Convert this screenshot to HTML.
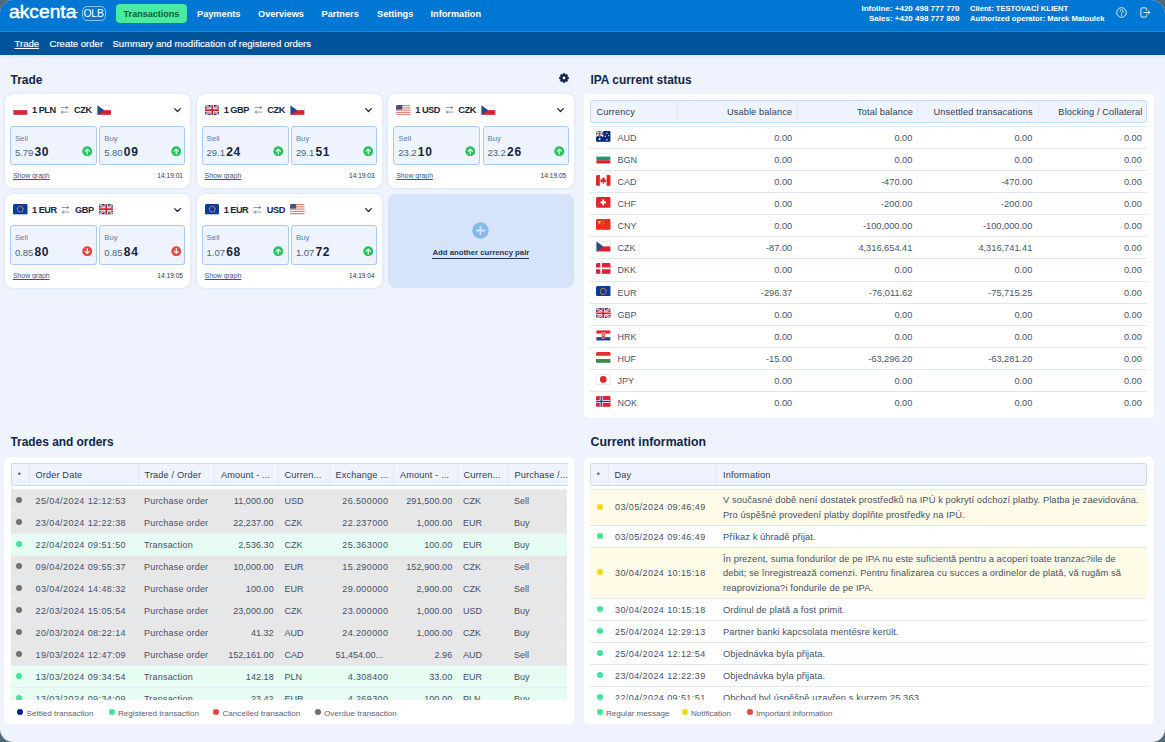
<!DOCTYPE html>
<html><head><meta charset="utf-8"><title>Akcenta OLB</title>
<style>
*{box-sizing:border-box;margin:0;padding:0}
html,body{width:1165px;height:742px;overflow:hidden;background:#4f6b75}
body{font-family:"Liberation Sans",sans-serif;color:#1a2540;-webkit-font-smoothing:antialiased}
#app{position:absolute;left:0;top:0;width:1165px;height:742px;background:#eef3fd;border-radius:13px 14.5px 13px 13px;overflow:hidden}
.abs{position:absolute}
#top{position:absolute;left:0;top:0;width:1165px;height:32px;background:#0077d3;border-bottom:1px solid #2189da}
#sub{position:absolute;left:0;top:32px;width:1165px;height:22.5px;background:#00549c;box-shadow:0 1px 3px rgba(40,80,140,.10)}
.logo{position:absolute;left:9px;top:0;font-size:17.5px;color:#fff;line-height:24px;font-weight:400;transform-origin:0 0;transform:scaleX(1.1);-webkit-text-stroke:0.45px #fff}
.lgl{position:absolute;height:1.4px;background:#fff;top:11.6px}
.olb{position:absolute;left:81.5px;top:5.5px;width:24.3px;height:15.2px;border:1px solid #8fc3ef;border-radius:5px;color:#fff;font-size:10.4px;line-height:13.4px;text-align:center;letter-spacing:-0.1px}
.btn{position:absolute;left:116px;top:4px;width:71px;height:19px;background:#48eb9f;border-radius:4px;color:#0d5c3c;font-size:9.05px;font-weight:bold;text-align:center;line-height:21px}
.nav{position:absolute;top:5px;color:#fff;font-size:9.2px;font-weight:bold;line-height:19px;white-space:nowrap}
.sn{position:absolute;top:37.5px;color:#fff;font-size:9.55px;line-height:12px;white-space:nowrap;-webkit-text-stroke:0.15px #fff}
.ti{position:absolute;color:#fff;font-size:7.8px;line-height:10px;white-space:nowrap;font-weight:bold}
h2{position:absolute;font-size:12.3px;font-weight:bold;color:#12264a;line-height:14px;white-space:nowrap}
.card{position:absolute;width:185.2px;height:93.8px;background:#fff;border-radius:8px;box-shadow:0 0 3px rgba(120,150,200,.25)}
.ch{position:absolute;left:8px;top:10px;height:11px;display:flex;align-items:center;font-size:9.2px;font-weight:bold;color:#1a2540;white-space:nowrap;letter-spacing:-0.5px}
.fl{display:block;flex:none;border-radius:1.5px}
.c1{margin-left:4.4px}.sw{margin:0 4.6px 0 4.8px;flex:none}.c2{margin-right:5.2px;letter-spacing:-0.35px}
.chev{position:absolute;left:168.5px;top:14px}
.bx{position:absolute;top:31.3px;width:86.9px;height:40px;background:#eef3fd;border:1px solid #a9cbf3;border-radius:3px}
.lb{position:absolute;left:3.8px;top:7.1px;font-size:7.8px;line-height:9px;color:#5b7fa8}
.vl{position:absolute;left:3.8px;top:17.7px;line-height:14px;white-space:nowrap;height:14px}
.sm{font-size:9.5px;color:#47648c;letter-spacing:-0.05px}
.bg{font-size:12px;font-weight:bold;color:#16233f;margin-left:1.3px;letter-spacing:0.7px}
.ar{position:absolute;left:70.6px;top:19.2px}
.sg{position:absolute;left:7.8px;top:77.3px;font-size:6.9px;text-decoration-thickness:0.6px;line-height:9px;color:#34558a;text-decoration:underline}
.tm{position:absolute;right:7.3px;top:77.3px;font-size:6.6px;line-height:9px;color:#2a3550}
.r1{height:93.6px}.r1 .bx{height:39.2px}.r1 .sg,.r1 .tm{top:76.8px}
.add{position:absolute;left:388.4px;top:194.1px;width:185.2px;height:93.8px;background:#d6e4fb;border-radius:8px}
.panel{position:absolute;background:#fff;border-radius:5px}
.th{position:absolute;background:#eef3fd;border:1px solid #c6ddf8;border-radius:2.5px}
.th span{position:absolute;top:0;font-size:9.2px;line-height:22.6px;color:#2f3b52;white-space:nowrap;letter-spacing:0.14px}
.th.b span{line-height:22.4px}
.th i{position:absolute;top:0;width:1px;height:100%;background:#dfe9f9}
.ir{position:absolute;left:6px;width:557.4px;height:22.08px;border-top:1px solid #dfe8f5}
.ir .fl{position:absolute;left:6px;top:4px;height:10.8px}
.ir .cc{position:absolute;left:27.5px;top:0;font-size:9px;line-height:22px;color:#4a556a}
.ir .n{position:absolute;top:0;font-size:9.25px;line-height:22px;color:#4a556a;white-space:nowrap}
.tr{position:absolute;left:6px;width:556.5px;height:22px;border-top:1px solid #e6edf8}
.tr.g{background:#e7e7e7}.tr.r{background:#e7fcf2}
.tr .dot{position:absolute;left:5.5px;top:7px;width:6px;height:6px;border-radius:50%;background:#6f6f6f}
.tr.r .dot{background:#42e598}
.tt,.tn{position:absolute;top:0;font-size:9px;line-height:22px;color:#445068;white-space:nowrap}
.lg{position:absolute;font-size:8.1px;line-height:10px;color:#596173;white-space:nowrap}
.lg i{position:absolute;left:-9px;top:0.2px;width:6px;height:6px;border-radius:50%}
.cr{position:absolute;left:6px;width:557.4px;border-top:1px solid #dfe8f5}
.cr.y{background:#fffbe6}
.cr .dot{position:absolute;left:6.5px;top:50%;margin-top:-4px;width:6px;height:6px;border-radius:50%;background:#42e598}
.cr.y .dot{background:#ffd60a}
.cr .d{position:absolute;left:25px;top:50%;margin-top:-7.25px;font-size:9px;line-height:14.5px;color:#445068;white-space:nowrap;letter-spacing:0.42px}
.cr .m{position:absolute;left:133px;top:3.5px;font-size:9.3px;line-height:14.5px;color:#445068;white-space:nowrap;letter-spacing:0.1px}
.clip{position:absolute;overflow:hidden}
</style></head><body><div id="app">
<div id="top">
<div class="logo">akcenta</div><i class="lgl" style="left:15.5px;width:6px"></i><i class="lgl" style="left:73px;width:4.8px"></i>
<div class="olb">OLB</div>
<div class="btn">Transactions</div>
<div class="nav" style="left:197px">Payments</div>
<div class="nav" style="left:258px">Overviews</div>
<div class="nav" style="left:321.5px">Partners</div>
<div class="nav" style="left:377px">Settings</div>
<div class="nav" style="left:430.5px">Information</div>
<div class="ti" style="right:205.5px;top:3.5px;text-align:right;font-size:8px">Infoline: +420 498 777 770<br>Sales: +420 498 777 800</div>
<div class="ti" style="left:970px;top:3.5px;font-size:7.62px">Client: TESTOVACÍ KLIENT<br>Authorized operator: Marek Matoulek</div>
<svg class="abs" style="left:1115.5px;top:6.5px" width="11" height="11" viewBox="0 0 22 22"><circle cx="11" cy="11" r="9.6" fill="none" stroke="#e6f2fc" stroke-width="1.9"/><path d="M8 8.6a3.1 3.1 0 1 1 4.6 2.7c-1.1.7-1.6 1.2-1.6 2.5" fill="none" stroke="#e6f2fc" stroke-width="1.9" stroke-linecap="round"/><circle cx="11" cy="16.4" r="1.2" fill="#e6f2fc"/></svg>
<svg class="abs" style="left:1139.5px;top:6.5px" width="11" height="11" viewBox="0 0 22 22"><path d="M13.5 7.5V4.2a2.4 2.4 0 0 0-2.4-2.4H4.2a2.4 2.4 0 0 0-2.4 2.4v13.6a2.4 2.4 0 0 0 2.4 2.4h6.9a2.4 2.4 0 0 0 2.4-2.4v-3.3" fill="none" stroke="#e6f2fc" stroke-width="2"/><path d="M7 11h10" stroke="#e6f2fc" stroke-width="2.2"/><path d="M16 7.2L21 11l-5 3.8z" fill="#eaf4fd"/></svg>
</div>
<div id="sub">
</div>
<div class="sn" style="left:14.5px;text-decoration:underline">Trade</div>
<div class="sn" style="left:49.5px">Create order</div>
<div class="sn" style="left:112.5px">Summary and modification of registered orders</div>

<h2 style="left:10.5px;top:72.5px;font-size:12px">Trade</h2>
<svg class="abs" style="left:557.9px;top:71.9px" width="12" height="12" viewBox="-6 -6 12 12"><path d="M-0.89 -3.44 L-0.76 -4.54 L0.76 -4.54 L0.89 -3.44 L1.80 -3.06 L2.67 -3.74 L3.74 -2.67 L3.06 -1.80 L3.44 -0.89 L4.54 -0.76 L4.54 0.76 L3.44 0.89 L3.06 1.80 L3.74 2.67 L2.67 3.74 L1.80 3.06 L0.89 3.44 L0.76 4.54 L-0.76 4.54 L-0.89 3.44 L-1.80 3.06 L-2.67 3.74 L-3.74 2.67 L-3.06 1.80 L-3.44 0.89 L-4.54 0.76 L-4.54 -0.76 L-3.44 -0.89 L-3.06 -1.80 L-3.74 -2.67 L-2.67 -3.74 L-1.80 -3.06Z" fill="#0f1f42" stroke="#0f1f42" stroke-width="0.7" stroke-linejoin="round"/><circle r="1.45" fill="#f4f7fe"/></svg>
<div class="card r1" style="left:5.1px;top:94.3px">
<div class="ch"><svg class="fl" width="14.5" height="10.3" viewBox="0 0 28 20" preserveAspectRatio="none"><rect width="28" height="20" fill="#fff"/><rect y="10" width="28" height="10" fill="#dc2438"/><rect x=".5" y=".5" width="27" height="19" fill="none" stroke="#d8dde6" stroke-width="1"/></svg><span class="c1">1 PLN</span><svg class="sw" width="9" height="8" viewBox="0 0 18 16"><path d="M2 5H15.5M12 1.5L15.5 5 12 8.5" fill="none" stroke="#5c6b82" stroke-width="1.5" stroke-linecap="round" stroke-linejoin="round" transform="translate(0,-1) scale(1,.8)"/><path d="M16 11H2.5M6 7.5L2.5 11 6 14.5" fill="none" stroke="#5c6b82" stroke-width="1.5" stroke-linecap="round" stroke-linejoin="round" transform="translate(0,3.4) scale(1,.8)"/></svg><span class="c2">CZK</span><svg class="fl" width="14.5" height="10.3" viewBox="0 0 28 20" preserveAspectRatio="none"><rect width="28" height="20" fill="#fff"/><rect y="10" width="28" height="10" fill="#d8212c"/><path d="M0 0 L14 10 L0 20Z" fill="#1f4a8c"/><rect x=".5" y=".5" width="27" height="19" fill="none" stroke="#d8dde6" stroke-width="1"/></svg></div><svg class="chev" width="7" height="4.4" viewBox="0 0 16 10"><path d="M1.5 1.5L8 8l6.5-6.5" fill="none" stroke="#1a2540" stroke-width="2.9" stroke-linecap="round" stroke-linejoin="round"/></svg>
<div class="bx" style="left:5px"><div class="lb">Sell</div><div class="vl"><span class="sm">5.79</span><span class="bg">30</span></div><svg class="ar" width="10.5" height="10.5" viewBox="0 0 22 22"><circle cx="11" cy="11" r="10.4" fill="#22c55e"/><path d="M11 16.5V7M6.6 10.8L11 6.4l4.4 4.4" fill="none" stroke="#fff" stroke-width="2.4" stroke-linecap="round" stroke-linejoin="round"/></svg></div>
<div class="bx" style="left:94.3px;width:86px"><div class="lb">Buy</div><div class="vl"><span class="sm">5.80</span><span class="bg">09</span></div><svg class="ar" width="10.5" height="10.5" viewBox="0 0 22 22"><circle cx="11" cy="11" r="10.4" fill="#22c55e"/><path d="M11 16.5V7M6.6 10.8L11 6.4l4.4 4.4" fill="none" stroke="#fff" stroke-width="2.4" stroke-linecap="round" stroke-linejoin="round"/></svg></div>
<div class="sg">Show graph</div><div class="tm">14:19:01</div>
</div><div class="card r1" style="left:196.8px;top:94.3px">
<div class="ch"><svg class="fl" width="14.5" height="10.3" viewBox="0 0 28 20" preserveAspectRatio="none"><rect width="28" height="20" fill="#1c3f94"/><path d="M0 0L28 20M28 0L0 20" stroke="#fff" stroke-width="4"/><path d="M0 0L28 20M28 0L0 20" stroke="#d8212c" stroke-width="1.6"/><path d="M14 0V20M0 10H28" stroke="#fff" stroke-width="6.5"/><path d="M14 0V20M0 10H28" stroke="#d8212c" stroke-width="3.6"/></svg><span class="c1">1 GBP</span><svg class="sw" width="9" height="8" viewBox="0 0 18 16"><path d="M2 5H15.5M12 1.5L15.5 5 12 8.5" fill="none" stroke="#5c6b82" stroke-width="1.5" stroke-linecap="round" stroke-linejoin="round" transform="translate(0,-1) scale(1,.8)"/><path d="M16 11H2.5M6 7.5L2.5 11 6 14.5" fill="none" stroke="#5c6b82" stroke-width="1.5" stroke-linecap="round" stroke-linejoin="round" transform="translate(0,3.4) scale(1,.8)"/></svg><span class="c2">CZK</span><svg class="fl" width="14.5" height="10.3" viewBox="0 0 28 20" preserveAspectRatio="none"><rect width="28" height="20" fill="#fff"/><rect y="10" width="28" height="10" fill="#d8212c"/><path d="M0 0 L14 10 L0 20Z" fill="#1f4a8c"/><rect x=".5" y=".5" width="27" height="19" fill="none" stroke="#d8dde6" stroke-width="1"/></svg></div><svg class="chev" width="7" height="4.4" viewBox="0 0 16 10"><path d="M1.5 1.5L8 8l6.5-6.5" fill="none" stroke="#1a2540" stroke-width="2.9" stroke-linecap="round" stroke-linejoin="round"/></svg>
<div class="bx" style="left:5px"><div class="lb">Sell</div><div class="vl"><span class="sm">29.1</span><span class="bg">24</span></div><svg class="ar" width="10.5" height="10.5" viewBox="0 0 22 22"><circle cx="11" cy="11" r="10.4" fill="#22c55e"/><path d="M11 16.5V7M6.6 10.8L11 6.4l4.4 4.4" fill="none" stroke="#fff" stroke-width="2.4" stroke-linecap="round" stroke-linejoin="round"/></svg></div>
<div class="bx" style="left:94.3px;width:86px"><div class="lb">Buy</div><div class="vl"><span class="sm">29.1</span><span class="bg">51</span></div><svg class="ar" width="10.5" height="10.5" viewBox="0 0 22 22"><circle cx="11" cy="11" r="10.4" fill="#22c55e"/><path d="M11 16.5V7M6.6 10.8L11 6.4l4.4 4.4" fill="none" stroke="#fff" stroke-width="2.4" stroke-linecap="round" stroke-linejoin="round"/></svg></div>
<div class="sg">Show graph</div><div class="tm">14:19:03</div>
</div><div class="card r1" style="left:388.4px;top:94.3px">
<div class="ch"><svg class="fl" width="14.5" height="10.3" viewBox="0 0 28 20" preserveAspectRatio="none"><rect width="28" height="20" fill="#fff"/><g fill="#e07a72"><rect y="0" width="28" height="2.2"/><rect y="4.4" width="28" height="2.2"/><rect y="8.8" width="28" height="2.2"/><rect y="13.2" width="28" height="2.2"/><rect y="17.6" width="28" height="2.4"/></g><rect width="12" height="9" fill="#44557d"/></svg><span class="c1">1 USD</span><svg class="sw" width="9" height="8" viewBox="0 0 18 16"><path d="M2 5H15.5M12 1.5L15.5 5 12 8.5" fill="none" stroke="#5c6b82" stroke-width="1.5" stroke-linecap="round" stroke-linejoin="round" transform="translate(0,-1) scale(1,.8)"/><path d="M16 11H2.5M6 7.5L2.5 11 6 14.5" fill="none" stroke="#5c6b82" stroke-width="1.5" stroke-linecap="round" stroke-linejoin="round" transform="translate(0,3.4) scale(1,.8)"/></svg><span class="c2">CZK</span><svg class="fl" width="14.5" height="10.3" viewBox="0 0 28 20" preserveAspectRatio="none"><rect width="28" height="20" fill="#fff"/><rect y="10" width="28" height="10" fill="#d8212c"/><path d="M0 0 L14 10 L0 20Z" fill="#1f4a8c"/><rect x=".5" y=".5" width="27" height="19" fill="none" stroke="#d8dde6" stroke-width="1"/></svg></div><svg class="chev" width="7" height="4.4" viewBox="0 0 16 10"><path d="M1.5 1.5L8 8l6.5-6.5" fill="none" stroke="#1a2540" stroke-width="2.9" stroke-linecap="round" stroke-linejoin="round"/></svg>
<div class="bx" style="left:5px"><div class="lb">Sell</div><div class="vl"><span class="sm">23.2</span><span class="bg">10</span></div><svg class="ar" width="10.5" height="10.5" viewBox="0 0 22 22"><circle cx="11" cy="11" r="10.4" fill="#22c55e"/><path d="M11 16.5V7M6.6 10.8L11 6.4l4.4 4.4" fill="none" stroke="#fff" stroke-width="2.4" stroke-linecap="round" stroke-linejoin="round"/></svg></div>
<div class="bx" style="left:94.3px;width:86px"><div class="lb">Buy</div><div class="vl"><span class="sm">23.2</span><span class="bg">26</span></div><svg class="ar" width="10.5" height="10.5" viewBox="0 0 22 22"><circle cx="11" cy="11" r="10.4" fill="#22c55e"/><path d="M11 16.5V7M6.6 10.8L11 6.4l4.4 4.4" fill="none" stroke="#fff" stroke-width="2.4" stroke-linecap="round" stroke-linejoin="round"/></svg></div>
<div class="sg">Show graph</div><div class="tm">14:19:05</div>
</div><div class="card" style="left:5.1px;top:194.1px">
<div class="ch"><svg class="fl" width="14.5" height="10.3" viewBox="0 0 28 20" preserveAspectRatio="none"><rect width="28" height="20" fill="#0b3a9c"/><circle cx="14" cy="10" r="5.6" fill="none" stroke="#f2b92c" stroke-width="2" stroke-dasharray="1.6 1.33"/></svg><span class="c1">1 EUR</span><svg class="sw" width="9" height="8" viewBox="0 0 18 16"><path d="M2 5H15.5M12 1.5L15.5 5 12 8.5" fill="none" stroke="#5c6b82" stroke-width="1.5" stroke-linecap="round" stroke-linejoin="round" transform="translate(0,-1) scale(1,.8)"/><path d="M16 11H2.5M6 7.5L2.5 11 6 14.5" fill="none" stroke="#5c6b82" stroke-width="1.5" stroke-linecap="round" stroke-linejoin="round" transform="translate(0,3.4) scale(1,.8)"/></svg><span class="c2">GBP</span><svg class="fl" width="14.5" height="10.3" viewBox="0 0 28 20" preserveAspectRatio="none"><rect width="28" height="20" fill="#1c3f94"/><path d="M0 0L28 20M28 0L0 20" stroke="#fff" stroke-width="4"/><path d="M0 0L28 20M28 0L0 20" stroke="#d8212c" stroke-width="1.6"/><path d="M14 0V20M0 10H28" stroke="#fff" stroke-width="6.5"/><path d="M14 0V20M0 10H28" stroke="#d8212c" stroke-width="3.6"/></svg></div><svg class="chev" width="7" height="4.4" viewBox="0 0 16 10"><path d="M1.5 1.5L8 8l6.5-6.5" fill="none" stroke="#1a2540" stroke-width="2.9" stroke-linecap="round" stroke-linejoin="round"/></svg>
<div class="bx" style="left:5px"><div class="lb">Sell</div><div class="vl"><span class="sm">0.85</span><span class="bg">80</span></div><svg class="ar" width="10.5" height="10.5" viewBox="0 0 22 22"><circle cx="11" cy="11" r="10.4" fill="#e5483d"/><path d="M11 5.5V15M6.6 11.2L11 15.6l4.4-4.4" fill="none" stroke="#fff" stroke-width="2.4" stroke-linecap="round" stroke-linejoin="round"/></svg></div>
<div class="bx" style="left:94.3px;width:86px"><div class="lb">Buy</div><div class="vl"><span class="sm">0.85</span><span class="bg">84</span></div><svg class="ar" width="10.5" height="10.5" viewBox="0 0 22 22"><circle cx="11" cy="11" r="10.4" fill="#e5483d"/><path d="M11 5.5V15M6.6 11.2L11 15.6l4.4-4.4" fill="none" stroke="#fff" stroke-width="2.4" stroke-linecap="round" stroke-linejoin="round"/></svg></div>
<div class="sg">Show graph</div><div class="tm">14:19:05</div>
</div><div class="card" style="left:196.8px;top:194.1px">
<div class="ch"><svg class="fl" width="14.5" height="10.3" viewBox="0 0 28 20" preserveAspectRatio="none"><rect width="28" height="20" fill="#0b3a9c"/><circle cx="14" cy="10" r="5.6" fill="none" stroke="#f2b92c" stroke-width="2" stroke-dasharray="1.6 1.33"/></svg><span class="c1">1 EUR</span><svg class="sw" width="9" height="8" viewBox="0 0 18 16"><path d="M2 5H15.5M12 1.5L15.5 5 12 8.5" fill="none" stroke="#5c6b82" stroke-width="1.5" stroke-linecap="round" stroke-linejoin="round" transform="translate(0,-1) scale(1,.8)"/><path d="M16 11H2.5M6 7.5L2.5 11 6 14.5" fill="none" stroke="#5c6b82" stroke-width="1.5" stroke-linecap="round" stroke-linejoin="round" transform="translate(0,3.4) scale(1,.8)"/></svg><span class="c2">USD</span><svg class="fl" width="14.5" height="10.3" viewBox="0 0 28 20" preserveAspectRatio="none"><rect width="28" height="20" fill="#fff"/><g fill="#e07a72"><rect y="0" width="28" height="2.2"/><rect y="4.4" width="28" height="2.2"/><rect y="8.8" width="28" height="2.2"/><rect y="13.2" width="28" height="2.2"/><rect y="17.6" width="28" height="2.4"/></g><rect width="12" height="9" fill="#44557d"/></svg></div><svg class="chev" width="7" height="4.4" viewBox="0 0 16 10"><path d="M1.5 1.5L8 8l6.5-6.5" fill="none" stroke="#1a2540" stroke-width="2.9" stroke-linecap="round" stroke-linejoin="round"/></svg>
<div class="bx" style="left:5px"><div class="lb">Sell</div><div class="vl"><span class="sm">1.07</span><span class="bg">68</span></div><svg class="ar" width="10.5" height="10.5" viewBox="0 0 22 22"><circle cx="11" cy="11" r="10.4" fill="#22c55e"/><path d="M11 16.5V7M6.6 10.8L11 6.4l4.4 4.4" fill="none" stroke="#fff" stroke-width="2.4" stroke-linecap="round" stroke-linejoin="round"/></svg></div>
<div class="bx" style="left:94.3px;width:86px"><div class="lb">Buy</div><div class="vl"><span class="sm">1.07</span><span class="bg">72</span></div><svg class="ar" width="10.5" height="10.5" viewBox="0 0 22 22"><circle cx="11" cy="11" r="10.4" fill="#22c55e"/><path d="M11 16.5V7M6.6 10.8L11 6.4l4.4 4.4" fill="none" stroke="#fff" stroke-width="2.4" stroke-linecap="round" stroke-linejoin="round"/></svg></div>
<div class="sg">Show graph</div><div class="tm">14:19:04</div>
</div>
<div class="add">
<svg class="abs" style="left:83.6px;top:28px" width="17" height="17" viewBox="0 0 32 32"><circle cx="16" cy="16" r="15.5" fill="#86b9ea"/><path d="M16 9v14M9 16h14" stroke="#d6e4fb" stroke-width="3.4" stroke-linecap="round"/></svg>
<div class="abs" style="left:0;width:185px;top:53.9px;text-align:center;font-size:7.75px;font-weight:bold;color:#2a3550;line-height:10px"><span style="border-bottom:1px solid #2a3550;padding-bottom:1.5px">Add another currency pair</span></div>
</div>

<h2 style="left:590.5px;top:72.5px;font-size:11.9px">IPA current status</h2>
<div class="panel" style="left:584px;top:94px;width:569.8px;height:323.5px">
<div class="th" style="left:6px;top:5.9px;width:557.4px;height:23px"><span style="left:5.5px">Currency</span><span style="right:354.2px">Usable balance</span><span style="right:233.4px">Total balance</span><span style="right:113.7px">Unsettled transacations</span><span style="right:3.9px">Blocking / Collateral</span><i style="left:85.7px"></i><i style="left:206.2px"></i><i style="left:326.2px"></i><i style="left:446.7px"></i></div>
<div class="ir" style="top:32.00px"><svg class="fl" width="14.5" height="10.3" viewBox="0 0 28 20" preserveAspectRatio="none"><rect width="28" height="20" fill="#0a2a78"/><path d="M0 0L14 10M14 0L0 10" stroke="#fff" stroke-width="2.4"/><path d="M7 0V10M0 5H14" stroke="#fff" stroke-width="3.4"/><path d="M7 0V10M0 5H14" stroke="#d8212c" stroke-width="1.8"/><g fill="#fff"><circle cx="7" cy="15" r="2"/><circle cx="21" cy="4" r="1.3"/><circle cx="24.5" cy="8.5" r="1.2"/><circle cx="18" cy="9.5" r="1.2"/><circle cx="21" cy="16" r="1.4"/></g></svg><span class="cc">AUD</span><span class="n" style="right:355.2px">0.00</span><span class="n" style="right:235px">0.00</span><span class="n" style="right:115px">0.00</span><span class="n" style="right:5.5px">0.00</span></div>
<div class="ir" style="top:54.08px"><svg class="fl" width="14.5" height="10.3" viewBox="0 0 28 20" preserveAspectRatio="none"><rect width="28" height="20" fill="#fff"/><rect y="6.7" width="28" height="6.7" fill="#1f9a6a"/><rect y="13.4" width="28" height="6.6" fill="#d8212c"/><rect x=".5" y=".5" width="27" height="19" fill="none" stroke="#d8dde6" stroke-width="1"/></svg><span class="cc">BGN</span><span class="n" style="right:355.2px">0.00</span><span class="n" style="right:235px">0.00</span><span class="n" style="right:115px">0.00</span><span class="n" style="right:5.5px">0.00</span></div>
<div class="ir" style="top:76.16px"><svg class="fl" width="14.5" height="10.3" viewBox="0 0 28 20" preserveAspectRatio="none"><rect width="28" height="20" fill="#fff"/><rect width="7.5" height="20" fill="#e0262d"/><rect x="20.5" width="7.5" height="20" fill="#e0262d"/><path d="M14 3.5l1.5 3 2-1-.6 4 2.2-1.4.4 1.6 1.6-.2-2.6 3.2.6 1.3-4.3-.6v3.1h-1.6v-3.1l-4.3.6.6-1.3L6.9 9.5l1.6.2.4-1.6 2.2 1.4-.6-4 2 1z" fill="#e0262d"/></svg><span class="cc">CAD</span><span class="n" style="right:355.2px">0.00</span><span class="n" style="right:235px">-470.00</span><span class="n" style="right:115px">-470.00</span><span class="n" style="right:5.5px">0.00</span></div>
<div class="ir" style="top:98.24px"><svg class="fl" width="14.5" height="10.3" viewBox="0 0 28 20" preserveAspectRatio="none"><rect width="28" height="20" rx="1.5" fill="#e0262d"/><path d="M14 4.5V15.5M8.5 10H19.5" stroke="#fff" stroke-width="3.6"/></svg><span class="cc">CHF</span><span class="n" style="right:355.2px">0.00</span><span class="n" style="right:235px">-200.00</span><span class="n" style="right:115px">-200.00</span><span class="n" style="right:5.5px">0.00</span></div>
<div class="ir" style="top:120.32px"><svg class="fl" width="14.5" height="10.3" viewBox="0 0 28 20" preserveAspectRatio="none"><rect width="28" height="20" fill="#ee2a1e"/><circle cx="6.5" cy="6" r="2.6" fill="#ffd93b"/><g fill="#ffd93b"><circle cx="12" cy="2.5" r=".9"/><circle cx="14" cy="5" r=".9"/><circle cx="14" cy="8.2" r=".9"/><circle cx="12" cy="10.6" r=".9"/></g></svg><span class="cc">CNY</span><span class="n" style="right:355.2px">0.00</span><span class="n" style="right:235px">-100,000.00</span><span class="n" style="right:115px">-100,000.00</span><span class="n" style="right:5.5px">0.00</span></div>
<div class="ir" style="top:142.40px"><svg class="fl" width="14.5" height="10.3" viewBox="0 0 28 20" preserveAspectRatio="none"><rect width="28" height="20" fill="#fff"/><rect y="10" width="28" height="10" fill="#d8212c"/><path d="M0 0 L14 10 L0 20Z" fill="#1f4a8c"/><rect x=".5" y=".5" width="27" height="19" fill="none" stroke="#d8dde6" stroke-width="1"/></svg><span class="cc">CZK</span><span class="n" style="right:355.2px">-87.00</span><span class="n" style="right:235px">4,316,654.41</span><span class="n" style="right:115px">4,316,741.41</span><span class="n" style="right:5.5px">0.00</span></div>
<div class="ir" style="top:164.48px"><svg class="fl" width="14.5" height="10.3" viewBox="0 0 28 20" preserveAspectRatio="none"><rect width="28" height="20" fill="#dc2438"/><path d="M10 0V20M0 10H28" stroke="#fff" stroke-width="3.4"/></svg><span class="cc">DKK</span><span class="n" style="right:355.2px">0.00</span><span class="n" style="right:235px">0.00</span><span class="n" style="right:115px">0.00</span><span class="n" style="right:5.5px">0.00</span></div>
<div class="ir" style="top:186.56px"><svg class="fl" width="14.5" height="10.3" viewBox="0 0 28 20" preserveAspectRatio="none"><rect width="28" height="20" fill="#0b3a9c"/><circle cx="14" cy="10" r="5.6" fill="none" stroke="#f2b92c" stroke-width="2" stroke-dasharray="1.6 1.33"/></svg><span class="cc">EUR</span><span class="n" style="right:355.2px">-296.37</span><span class="n" style="right:235px">-76,011.62</span><span class="n" style="right:115px">-75,715.25</span><span class="n" style="right:5.5px">0.00</span></div>
<div class="ir" style="top:208.64px"><svg class="fl" width="14.5" height="10.3" viewBox="0 0 28 20" preserveAspectRatio="none"><rect width="28" height="20" fill="#1c3f94"/><path d="M0 0L28 20M28 0L0 20" stroke="#fff" stroke-width="4"/><path d="M0 0L28 20M28 0L0 20" stroke="#d8212c" stroke-width="1.6"/><path d="M14 0V20M0 10H28" stroke="#fff" stroke-width="6.5"/><path d="M14 0V20M0 10H28" stroke="#d8212c" stroke-width="3.6"/></svg><span class="cc">GBP</span><span class="n" style="right:355.2px">0.00</span><span class="n" style="right:235px">0.00</span><span class="n" style="right:115px">0.00</span><span class="n" style="right:5.5px">0.00</span></div>
<div class="ir" style="top:230.72px"><svg class="fl" width="14.5" height="10.3" viewBox="0 0 28 20" preserveAspectRatio="none"><rect width="28" height="20" fill="#fff"/><rect width="28" height="6.7" fill="#e0262d"/><rect y="13.3" width="28" height="6.7" fill="#1c3f94"/><path d="M10.5 5h7v7.5a3.5 3.5 0 0 1-7 0z" fill="#e0262d" stroke="#fff" stroke-width=".8"/><path d="M12.2 6.5h1.8v1.8h-1.8zM14 8.3h1.8v1.8H14zM12.2 10.1h1.8v1.8h-1.8z" fill="#fff"/><rect x=".5" y=".5" width="27" height="19" fill="none" stroke="#d8dde6" stroke-width="1"/></svg><span class="cc">HRK</span><span class="n" style="right:355.2px">0.00</span><span class="n" style="right:235px">0.00</span><span class="n" style="right:115px">0.00</span><span class="n" style="right:5.5px">0.00</span></div>
<div class="ir" style="top:252.80px"><svg class="fl" width="14.5" height="10.3" viewBox="0 0 28 20" preserveAspectRatio="none"><rect width="28" height="20" fill="#fff"/><rect width="28" height="7" fill="#e0312f"/><rect y="13" width="28" height="7" fill="#3c8a4f"/></svg><span class="cc">HUF</span><span class="n" style="right:355.2px">-15.00</span><span class="n" style="right:235px">-63,296.20</span><span class="n" style="right:115px">-63,281.20</span><span class="n" style="right:5.5px">0.00</span></div>
<div class="ir" style="top:274.88px"><svg class="fl" width="14.5" height="10.3" viewBox="0 0 28 20" preserveAspectRatio="none"><rect width="28" height="20" fill="#fff"/><circle cx="14" cy="10" r="6.4" fill="#e0262d"/><rect x=".5" y=".5" width="27" height="19" fill="none" stroke="#d8dde6" stroke-width="1"/></svg><span class="cc">JPY</span><span class="n" style="right:355.2px">0.00</span><span class="n" style="right:235px">0.00</span><span class="n" style="right:115px">0.00</span><span class="n" style="right:5.5px">0.00</span></div>
<div class="ir" style="top:296.96px"><svg class="fl" width="14.5" height="10.3" viewBox="0 0 28 20" preserveAspectRatio="none"><rect width="28" height="20" fill="#dc2438"/><path d="M10 0V20M0 10H28" stroke="#fff" stroke-width="5.4"/><path d="M10 0V20M0 10H28" stroke="#1c3f94" stroke-width="2.6"/></svg><span class="cc">NOK</span><span class="n" style="right:355.2px">0.00</span><span class="n" style="right:235px">0.00</span><span class="n" style="right:115px">0.00</span><span class="n" style="right:5.5px">0.00</span></div>

</div>

<h2 style="left:10.5px;top:435px;font-size:11.9px">Trades and orders</h2>
<div class="panel" style="left:4.4px;top:456.6px;width:569.6px;height:267px;border-radius:5px"><div class="abs" style="left:0.6px;top:0;width:569px;height:267px">
<div class="th b" style="left:6px;top:6.3px;width:556.8px;height:23.1px;border-right:none;border-radius:2px 0 0 2px"><span style="left:5.5px">*</span><span style="left:23.5px">Order Date</span><span style="left:132.5px">Trade / Order</span><span style="left:209px">Amount - ...</span><span style="left:272.5px">Curren...</span><span style="left:323.5px">Exchange ...</span><span style="left:388px">Amount - ...</span><span style="left:451.5px">Curren...</span><span style="left:502.5px">Purchase /...</span><i style="left:16.9px"></i><i style="left:125.9px"></i><i style="left:202.1px"></i><i style="left:266.3px"></i><i style="left:317.1px"></i><i style="left:381.3px"></i><i style="left:445.1px"></i><i style="left:495.8px"></i></div>
<div class="clip" style="left:0;top:0;width:569px;height:243.3px">
<div class="tr g" style="top:32.4px"><i class="dot"></i><span class="tt" style="left:24.5px;letter-spacing:0.42px">25/04/2024 12:12:53</span><span class="tt" style="left:133px;letter-spacing:0.2px">Purchase order</span><span class="tn" style="right:293.8px;letter-spacing:0.05px">11,000.00</span><span class="tt" style="left:273.5px">USD</span><span class="tn" style="right:179.2px;letter-spacing:0.38px">26.500000</span><span class="tn" style="right:115.2px;letter-spacing:0.1px">291,500.00</span><span class="tt" style="left:452px">CZK</span><span class="tt" style="left:503px">Sell</span></div>
<div class="tr g" style="top:54.4px"><i class="dot"></i><span class="tt" style="left:24.5px;letter-spacing:0.42px">23/04/2024 12:22:38</span><span class="tt" style="left:133px;letter-spacing:0.2px">Purchase order</span><span class="tn" style="right:293.8px;letter-spacing:0.05px">22,237.00</span><span class="tt" style="left:273.5px">CZK</span><span class="tn" style="right:179.2px;letter-spacing:0.38px">22.237000</span><span class="tn" style="right:115.2px;letter-spacing:0.1px">1,000.00</span><span class="tt" style="left:452px">EUR</span><span class="tt" style="left:503px">Buy</span></div>
<div class="tr r" style="top:76.4px"><i class="dot"></i><span class="tt" style="left:24.5px;letter-spacing:0.42px">22/04/2024 09:51:50</span><span class="tt" style="left:133px;letter-spacing:0.2px">Transaction</span><span class="tn" style="right:293.8px;letter-spacing:0.05px">2,536.30</span><span class="tt" style="left:273.5px">CZK</span><span class="tn" style="right:179.2px;letter-spacing:0.38px">25.363000</span><span class="tn" style="right:115.2px;letter-spacing:0.1px">100.00</span><span class="tt" style="left:452px">EUR</span><span class="tt" style="left:503px">Buy</span></div>
<div class="tr g" style="top:98.4px"><i class="dot"></i><span class="tt" style="left:24.5px;letter-spacing:0.42px">09/04/2024 09:55:37</span><span class="tt" style="left:133px;letter-spacing:0.2px">Purchase order</span><span class="tn" style="right:293.8px;letter-spacing:0.05px">10,000.00</span><span class="tt" style="left:273.5px">EUR</span><span class="tn" style="right:179.2px;letter-spacing:0.38px">15.290000</span><span class="tn" style="right:115.2px;letter-spacing:0.1px">152,900.00</span><span class="tt" style="left:452px">CZK</span><span class="tt" style="left:503px">Sell</span></div>
<div class="tr g" style="top:120.4px"><i class="dot"></i><span class="tt" style="left:24.5px;letter-spacing:0.42px">03/04/2024 14:48:32</span><span class="tt" style="left:133px;letter-spacing:0.2px">Purchase order</span><span class="tn" style="right:293.8px;letter-spacing:0.05px">100.00</span><span class="tt" style="left:273.5px">EUR</span><span class="tn" style="right:179.2px;letter-spacing:0.38px">29.000000</span><span class="tn" style="right:115.2px;letter-spacing:0.1px">2,900.00</span><span class="tt" style="left:452px">CZK</span><span class="tt" style="left:503px">Sell</span></div>
<div class="tr g" style="top:142.4px"><i class="dot"></i><span class="tt" style="left:24.5px;letter-spacing:0.42px">22/03/2024 15:05:54</span><span class="tt" style="left:133px;letter-spacing:0.2px">Purchase order</span><span class="tn" style="right:293.8px;letter-spacing:0.05px">23,000.00</span><span class="tt" style="left:273.5px">CZK</span><span class="tn" style="right:179.2px;letter-spacing:0.38px">23.000000</span><span class="tn" style="right:115.2px;letter-spacing:0.1px">1,000.00</span><span class="tt" style="left:452px">USD</span><span class="tt" style="left:503px">Buy</span></div>
<div class="tr g" style="top:164.4px"><i class="dot"></i><span class="tt" style="left:24.5px;letter-spacing:0.42px">20/03/2024 08:22:14</span><span class="tt" style="left:133px;letter-spacing:0.2px">Purchase order</span><span class="tn" style="right:293.8px;letter-spacing:0.05px">41.32</span><span class="tt" style="left:273.5px">AUD</span><span class="tn" style="right:179.2px;letter-spacing:0.38px">24.200000</span><span class="tn" style="right:115.2px;letter-spacing:0.1px">1,000.00</span><span class="tt" style="left:452px">CZK</span><span class="tt" style="left:503px">Buy</span></div>
<div class="tr g" style="top:186.4px"><i class="dot"></i><span class="tt" style="left:24.5px;letter-spacing:0.42px">19/03/2024 12:47:09</span><span class="tt" style="left:133px;letter-spacing:0.2px">Purchase order</span><span class="tn" style="right:293.8px;letter-spacing:0.05px">152,161.00</span><span class="tt" style="left:273.5px">CAD</span><span class="tt" style="left:324.5px">51,454.00...</span><span class="tn" style="right:115.2px;letter-spacing:0.1px">2.96</span><span class="tt" style="left:452px">AUD</span><span class="tt" style="left:503px">Sell</span></div>
<div class="tr r" style="top:208.4px"><i class="dot"></i><span class="tt" style="left:24.5px;letter-spacing:0.42px">13/03/2024 09:34:54</span><span class="tt" style="left:133px;letter-spacing:0.2px">Transaction</span><span class="tn" style="right:293.8px;letter-spacing:0.05px">142.18</span><span class="tt" style="left:273.5px">PLN</span><span class="tn" style="right:179.2px;letter-spacing:0.38px">4.308400</span><span class="tn" style="right:115.2px;letter-spacing:0.1px">33.00</span><span class="tt" style="left:452px">EUR</span><span class="tt" style="left:503px">Buy</span></div>
<div class="tr r" style="top:230.4px"><i class="dot"></i><span class="tt" style="left:24.5px;letter-spacing:0.42px">13/03/2024 09:34:09</span><span class="tt" style="left:133px;letter-spacing:0.2px">Transaction</span><span class="tn" style="right:293.8px;letter-spacing:0.05px">23.42</span><span class="tt" style="left:273.5px">EUR</span><span class="tn" style="right:179.2px;letter-spacing:0.38px">4.269300</span><span class="tn" style="right:115.2px;letter-spacing:0.1px">100.00</span><span class="tt" style="left:452px">PLN</span><span class="tt" style="left:503px">Buy</span></div>

</div>
<div class="lg" style="left:21.500px;top:252.7px"><i style="background:#00208f"></i>Settled transaction</div>
<div class="lg" style="left:113px;top:252.7px"><i style="background:#42e598"></i>Registered transaction</div>
<div class="lg" style="left:217.5px;top:252.7px"><i style="background:#e5483d"></i>Cancelled transaction</div>
<div class="lg" style="left:319px;top:252.7px"><i style="background:#6f6f6f"></i>Overdue transaction</div>
</div></div>

<h2 style="left:590.5px;top:435px">Current information</h2>
<div class="panel" style="left:584px;top:456.6px;width:569.8px;height:267px">
<div class="th b" style="left:6px;top:6.3px;width:557.4px;height:23.1px"><span style="left:5.5px">*</span><span style="left:23.5px">Day</span><span style="left:132px">Information</span><i style="left:16.6px"></i><i style="left:125.2px"></i></div>
<div class="clip" style="left:0;top:0;width:570.5px;height:243.3px">
<div class="cr y" style="top:32.4px;height:36.5px"><i class="dot"></i><span class="d">03/05/2024 09:46:49</span><span class="m">V současné době není dostatek prostředků na IPÚ k pokrytí odchozí platby. Platba je zaevidována.<br>Pro úspěšné provedení platby doplňte prostředky na IPÚ.</span></div>
<div class="cr" style="top:68.9px;height:22px"><i class="dot"></i><span class="d">03/05/2024 09:46:49</span><span class="m">Příkaz k úhradě přijat.</span></div>
<div class="cr y" style="top:90.9px;height:51px"><i class="dot"></i><span class="d">30/04/2024 10:15:18</span><span class="m">În prezent, suma fondurilor de pe IPA nu este suficientă pentru a acoperi toate tranzac?iile de<br>debit; se înregistrează comenzi. Pentru finalizarea cu succes a ordinelor de plată, vă rugăm să<br>reaproviziona?i fondurile de pe IPA.</span></div>
<div class="cr" style="top:141.9px;height:22px"><i class="dot"></i><span class="d">30/04/2024 10:15:18</span><span class="m">Ordinul de plată a fost primit.</span></div>
<div class="cr" style="top:163.9px;height:22px"><i class="dot"></i><span class="d">25/04/2024 12:29:13</span><span class="m">Partner banki kapcsolata mentésre került.</span></div>
<div class="cr" style="top:185.9px;height:22px"><i class="dot"></i><span class="d">25/04/2024 12:12:54</span><span class="m">Objednávka byla přijata.</span></div>
<div class="cr" style="top:207.9px;height:22px"><i class="dot"></i><span class="d">23/04/2024 12:22:39</span><span class="m">Objednávka byla přijata.</span></div>
<div class="cr" style="top:229.9px;height:22px"><i class="dot"></i><span class="d">22/04/2024 09:51:51</span><span class="m">Obchod byl úspěšně uzavřen s kurzem 25.363</span></div>
</div>
<div class="lg" style="left:22px;top:252.7px"><i style="background:#42e598"></i>Regular message</div>
<div class="lg" style="left:107px;top:252.7px"><i style="background:#ffd60a"></i>Notification</div>
<div class="lg" style="left:172px;top:252.7px"><i style="background:#e5483d"></i>Important information</div>
</div>

</div></body></html>
